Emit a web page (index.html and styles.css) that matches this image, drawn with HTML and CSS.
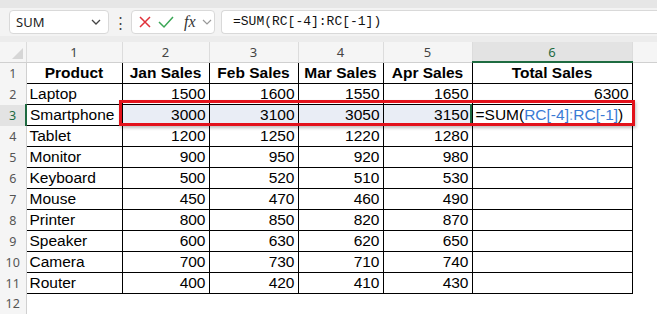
FILE: index.html
```html
<!DOCTYPE html>
<html lang="en">
<head>
  <meta charset="UTF-8">
  <title>Total Sales - R1C1 SUM</title>
  <link rel="stylesheet" href="styles.css">
</head>
<body>
  <div class="top-strip"></div>

  <!-- formula bar -->
  <div class="formula-bar">
    <div class="name-box">
      <span>SUM</span>
      <svg width="12" height="12" viewBox="0 0 12 12"><polyline points="2,4 6,8 10,4" fill="none" stroke="#444" stroke-width="1.3"/></svg>
    </div>
    <div class="bar-dots">⋮</div>
    <div class="fx-box">
      <svg class="fx-icon" width="14" height="14" viewBox="0 0 14 14"><path d="M2 2 L12 12 M12 2 L2 12" stroke="#e0313a" stroke-width="1.5" fill="none"/></svg>
      <svg class="fx-icon" width="16" height="14" viewBox="0 0 16 14"><polyline points="1,7 6,12 15,2" stroke="#3aa655" stroke-width="1.5" fill="none"/></svg>
      <span class="fx-label">fx</span>
      <svg width="10" height="10" viewBox="0 0 10 10"><polyline points="1,3 5,7 9,3" fill="none" stroke="#999" stroke-width="1.2"/></svg>
    </div>
    <div class="formula-input">=SUM(RC[-4]:RC[-1])</div>
  </div>
  <div class="gap-strip"></div>

  <div class="sheet">
    <table class="grid">
      <colgroup>
        <col class="c-rh"><col class="c1"><col class="c2"><col class="c3"><col class="c4"><col class="c5"><col class="c6"><col>
      </colgroup>
      <thead>
        <tr class="col-head">
          <th class="corner"><span class="corner-tri"></span></th>
          <th>1</th><th>2</th><th>3</th><th>4</th><th>5</th><th class="active-col">6</th><th class="blank-head"></th>
        </tr>
      </thead>
      <tbody>
        <tr><th>1</th><td class="b hd">Product</td><td class="b hd">Jan Sales</td><td class="b hd">Feb Sales</td><td class="b hd">Mar Sales</td><td class="b hd">Apr Sales</td><td class="b hd">Total Sales</td><td></td></tr>
        <tr><th>2</th><td class="b">Laptop</td><td class="b n">1500</td><td class="b n">1600</td><td class="b n">1550</td><td class="b n">1650</td><td class="b n">6300</td><td></td></tr>
        <tr><th class="active-row">3</th><td class="b">Smartphone</td><td class="b n sel">3000</td><td class="b n sel">3100</td><td class="b n sel">3050</td><td class="b n sel">3150</td><td class="b formula-cell">=SUM(<span class="ref">RC[-4]</span><span class="ref-sep">:</span><span class="ref">RC[-1]</span>)</td><td></td></tr>
        <tr><th>4</th><td class="b">Tablet</td><td class="b n">1200</td><td class="b n">1250</td><td class="b n">1220</td><td class="b n">1280</td><td class="b"></td><td></td></tr>
        <tr><th>5</th><td class="b">Monitor</td><td class="b n">900</td><td class="b n">950</td><td class="b n">920</td><td class="b n">980</td><td class="b"></td><td></td></tr>
        <tr><th>6</th><td class="b">Keyboard</td><td class="b n">500</td><td class="b n">520</td><td class="b n">510</td><td class="b n">530</td><td class="b"></td><td></td></tr>
        <tr><th>7</th><td class="b">Mouse</td><td class="b n">450</td><td class="b n">470</td><td class="b n">460</td><td class="b n">490</td><td class="b"></td><td></td></tr>
        <tr><th>8</th><td class="b">Printer</td><td class="b n">800</td><td class="b n">850</td><td class="b n">820</td><td class="b n">870</td><td class="b"></td><td></td></tr>
        <tr><th>9</th><td class="b">Speaker</td><td class="b n">600</td><td class="b n">630</td><td class="b n">620</td><td class="b n">650</td><td class="b"></td><td></td></tr>
        <tr><th>10</th><td class="b">Camera</td><td class="b n">700</td><td class="b n">730</td><td class="b n">710</td><td class="b n">740</td><td class="b"></td><td></td></tr>
        <tr><th>11</th><td class="b">Router</td><td class="b n">400</td><td class="b n">420</td><td class="b n">410</td><td class="b n">430</td><td class="b"></td><td></td></tr>
        <tr><th>12</th><td></td><td></td><td></td><td></td><td></td><td></td><td></td></tr>
      </tbody>
    </table>

    <!-- highlight round B3:F3 -->
    <div class="red-box"></div>
    <div class="cursor-bar"></div>
  </div>
</body>
</html>
```

FILE: styles.css
```css
/* base */
body {
  margin: 0;
  width: 657px;
  height: 314px;
  overflow: hidden;
  background: #fff;
  font-family: "Liberation Sans", Arial, sans-serif;
}

.top-strip {
  height: 8px;
  background: #e6e6e6;
}

/* formula bar */
.formula-bar {
  height: 28px;
  display: flex;
  align-items: center;
  padding-left: 9px;
  background: #f3f3f3;
  font-family: "Noto Sans", "Open Sans", sans-serif;
}

.name-box {
  width: 100px;
  height: 24px;
  box-sizing: border-box;
  display: flex;
  align-items: center;
  justify-content: space-between;
  padding: 0 6px 0 6px;
  background: #fff;
  border: 1px solid #d9d9d9;
  border-radius: 4px;
  font-size: 13px;
  color: #222;
}

.bar-dots {
  width: 22px;
  text-align: center;
  font-size: 15px;
  color: #444;
}

.fx-box {
  width: 84px;
  height: 24px;
  box-sizing: border-box;
  display: flex;
  align-items: center;
  gap: 6px;
  padding-left: 6px;
  background: #fff;
  border: 1px solid #d9d9d9;
  border-radius: 4px;
}

.fx-label {
  font-family: "Liberation Serif", "Times New Roman", serif;
  font-style: italic;
  font-size: 16px;
  color: #333;
  margin-left: 4px;
}

.formula-input {
  flex: 1;
  height: 24px;
  box-sizing: border-box;
  margin-left: 6px;
  padding-left: 11px;
  line-height: 22px;
  background: #fff;
  border: 1px solid #d9d9d9;
  border-right: none;
  border-radius: 4px 0 0 4px;
  font-family: "Liberation Mono", "DejaVu Sans Mono", monospace;
  font-size: 13px;
  color: #111;
}

.gap-strip {
  height: 6px;
  background: #ececec;
}

/* sheet */
.sheet {
  position: relative;
}

.grid {
  border-collapse: collapse;
  table-layout: fixed;
  width: 657px;
  font-size: 15.5px;
}

.c-rh { width: 26px; }
.c1 { width: 96px; }
.c2 { width: 87px; }
.c3 { width: 89px; }
.c4 { width: 85px; }
.c5 { width: 89px; }
.c6 { width: 160px; }

.grid td {
  height: 20px;
  padding: 0 3px;
  white-space: nowrap;
  overflow: hidden;
  line-height: 20px;
  color: #000;
}

.col-head th {
  height: 19px;
  padding: 0;
  background: #f5f5f5;
  border-right: 1px solid #dcdcdc;
  border-bottom: 1px solid #d0d0d0;
  font-family: "Noto Sans", "Open Sans", sans-serif;
  font-weight: normal;
  font-size: 13px;
  color: #444;
}

.col-head .blank-head {
  border-right: none;
}

.col-head .active-col {
  background: #e3e3e3;
  color: #1e6b41;
  border-bottom: 2px solid #1e6b41;
}

.corner {
  position: relative;
}

.corner-tri {
  position: absolute;
  right: 3px;
  bottom: 3px;
  width: 0;
  height: 0;
  border-left: 11px solid transparent;
  border-bottom: 11px solid #d6d6d6;
}

tbody th {
  padding: 0;
  background: #f5f5f5;
  border-right: 1px solid #d0d0d0;
  font-family: "Noto Sans", "Open Sans", sans-serif;
  font-weight: normal;
  font-size: 12.5px;
  color: #555;
}

tbody th.active-row {
  background: #e3e3e3;
  color: #1e6b41;
  border-right: 2px solid #1e6b41;
}

.b {
  border: 1px solid #000;
}

.hd {
  font-weight: bold;
  text-align: center;
}

.n {
  text-align: right;
}

.sel {
  background: #e9edf5;
}

.formula-cell {
  color: #000;
}

.ref {
  color: #3a7bd5;
}

.ref-sep {
  color: #7a9fd6;
}

/* overlays */
.red-box {
  position: absolute;
  left: 119px;
  top: 58px;
  width: 510px;
  height: 20px;
  border: 3px solid #e3121b;
  box-shadow: 1px 2px 3px rgba(0, 0, 0, 0.25);
}

.cursor-bar {
  position: absolute;
  left: 470px;
  top: 62px;
  width: 2px;
  height: 19px;
  background: #1e6b41;
}
```
